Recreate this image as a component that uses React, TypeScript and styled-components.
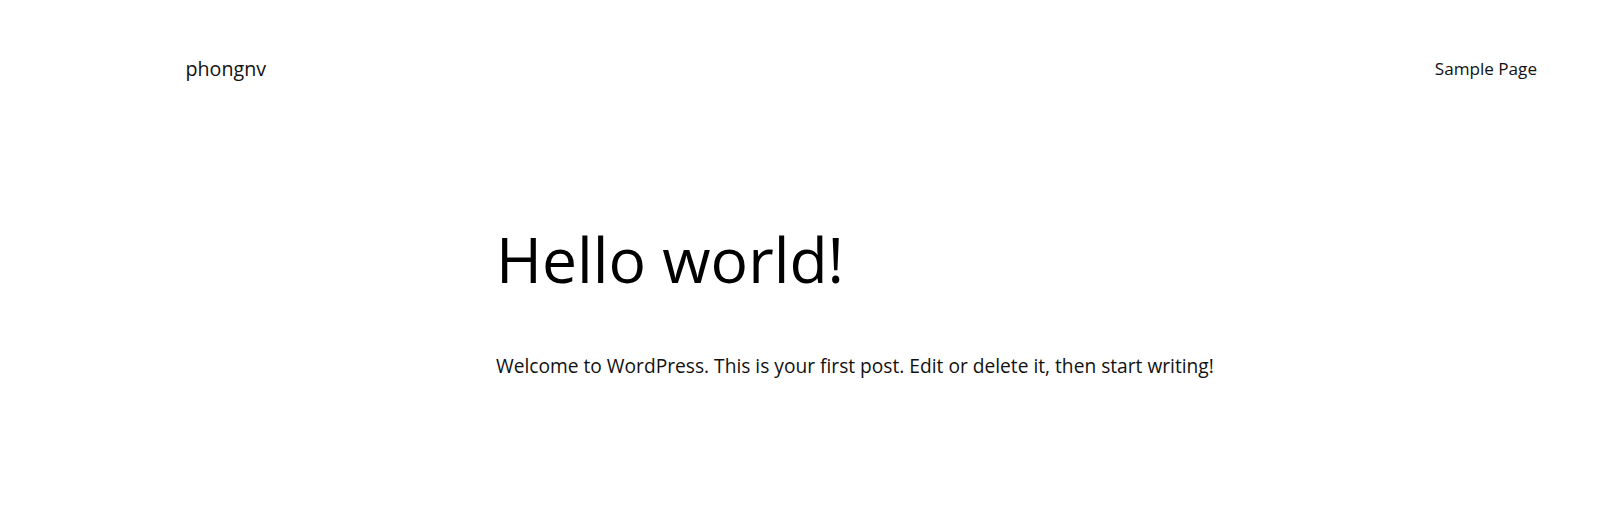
import React from "react";
import styled, { createGlobalStyle } from "styled-components";

const GlobalStyle = createGlobalStyle`
  html, body {
    margin: 0;
    padding: 0;
    background: #ffffff;
  }
  body {
    font-family: "Open Sans", "Noto Sans", sans-serif;
    color: #111111;
    -webkit-font-smoothing: antialiased;
  }
`;

const Page = styled.div`
  min-height: 519px;
  display: flex;
  flex-direction: column;
  background: #ffffff;
`;

const Header = styled.header`
  display: flex;
  justify-content: space-between;
  align-items: center;
  padding: 54px 80px 0 185.5px;
`;

const SiteTitle = styled.a`
  font-size: 19.67px;
  line-height: 29.5px;
  color: #111111;
  text-decoration: none;
`;

const Nav = styled.nav`
  display: flex;
  gap: 24px;
`;

const NavLink = styled.a`
  font-size: 17.1px;
  line-height: 25.5px;
  color: #111111;
  text-decoration: none;
`;

const Main = styled.main`
  display: flex;
  flex-direction: column;
  gap: 55px;
  padding: 138.5px 0 0 496px;
`;

const Title = styled.h1`
  margin: 0;
  font-size: 62.4px;
  line-height: 74.24px;
  font-weight: 400;
  color: #000000;
`;

const Paragraph = styled.p`
  margin: 0;
  font-size: 19.18px;
  line-height: 30.62px;
  font-weight: 400;
  color: #111111;
`;

export default function App() {
  return (
    <>
      <GlobalStyle />
      <Page>
        <Header>
          <SiteTitle href="#">phongnv</SiteTitle>
          <Nav>
            <NavLink href="#">Sample Page</NavLink>
          </Nav>
        </Header>
        <Main>
          <Title>Hello world!</Title>
          <Paragraph>
            Welcome to WordPress. This is your first post. Edit or delete it, then start writing!
          </Paragraph>
        </Main>
      </Page>
    </>
  );
}
